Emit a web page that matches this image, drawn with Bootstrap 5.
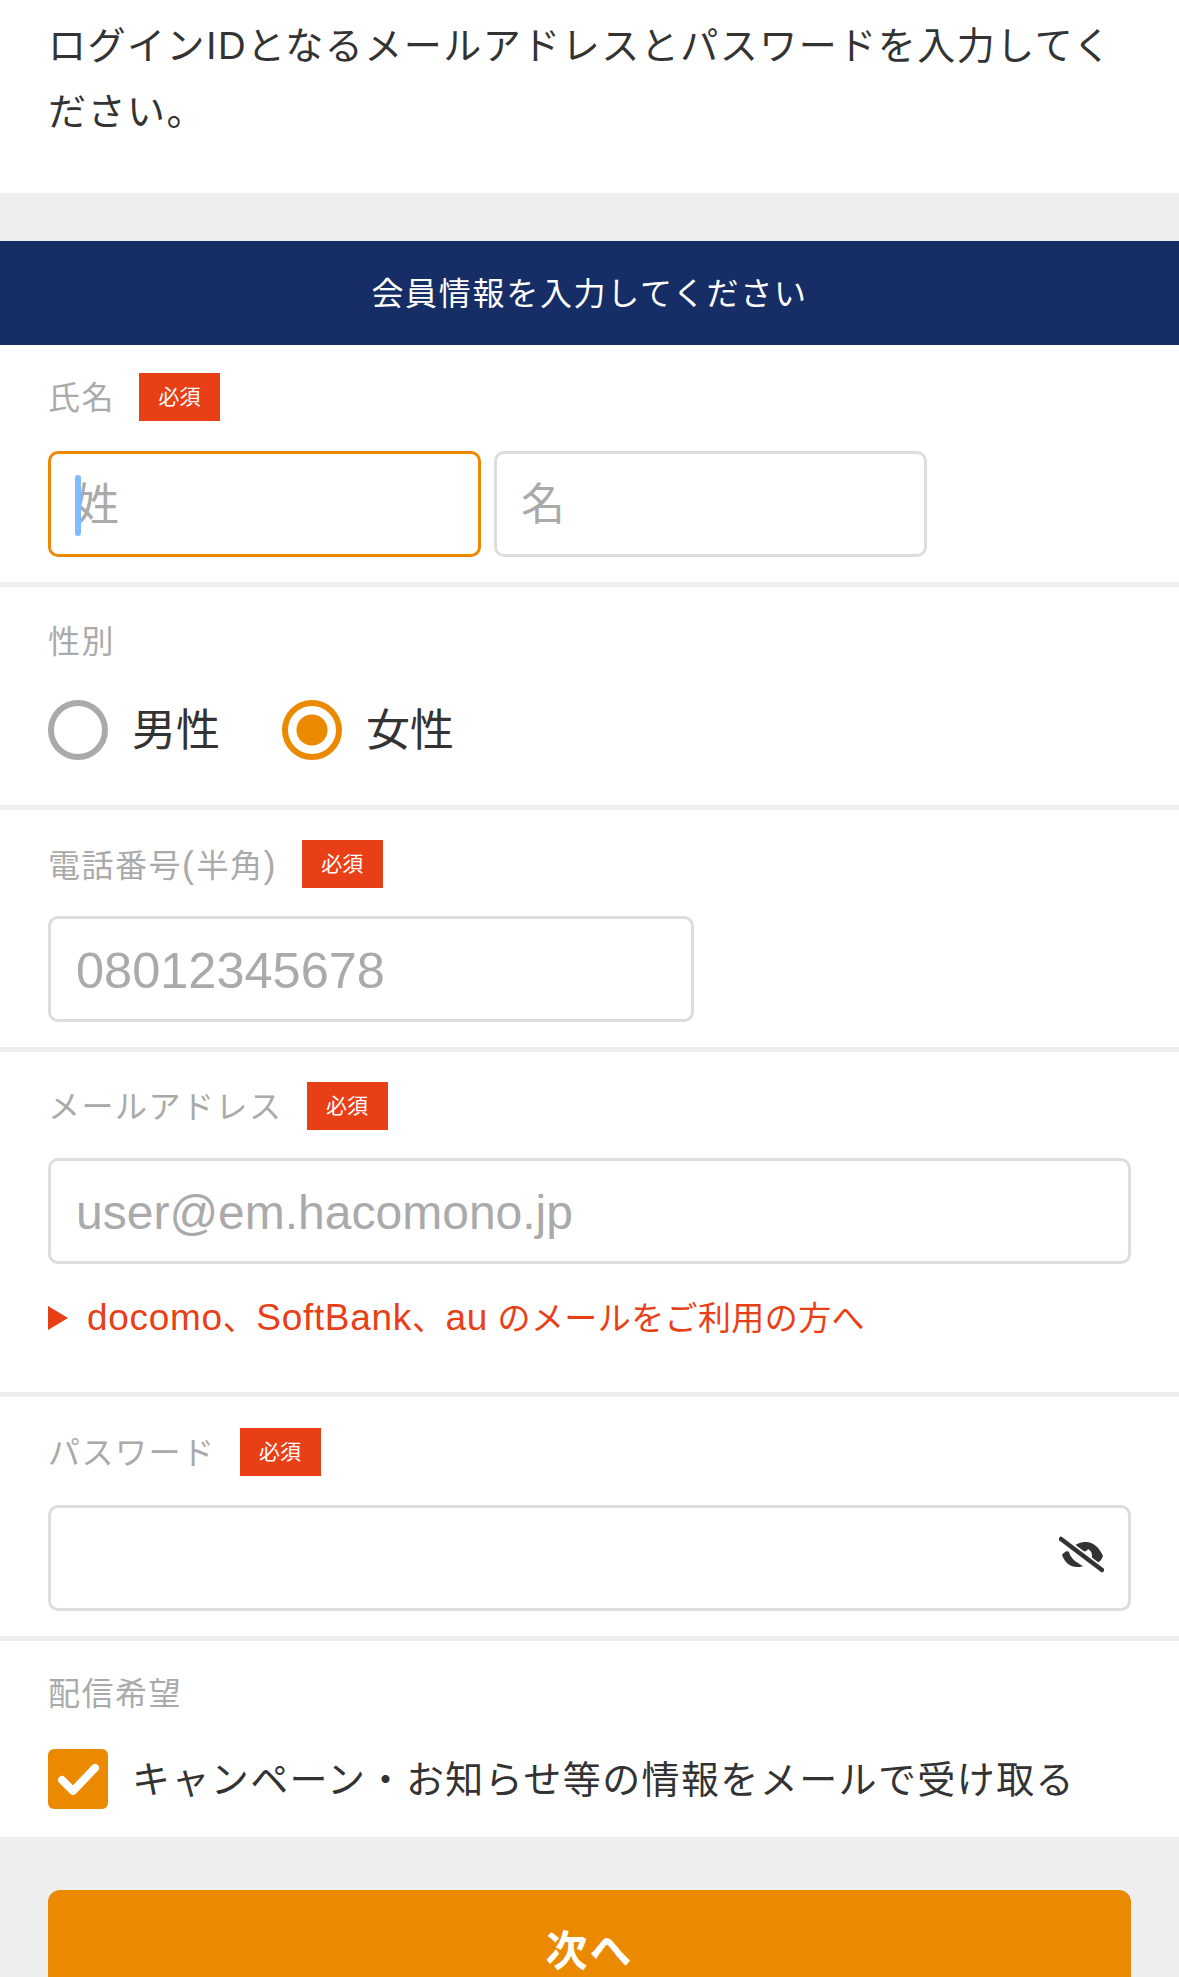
<!DOCTYPE html>
<html lang="ja">
<head>
<meta charset="utf-8">
<title>会員情報</title>
<link rel="stylesheet" href="https://cdn.jsdelivr.net/npm/bootstrap@5.3.0/dist/css/bootstrap.min.css">
<style>
html,body{background:#eee;}
body{font-family:"Liberation Sans","Noto Sans CJK JP",sans-serif;color:#333;font-weight:400;}
.page-clip{height:1977px;overflow:hidden;}
.intro-text{background:#fff;padding:13px 48px 48px;font-size:38px;line-height:66px;letter-spacing:1.5px;margin-bottom:48px;}
.form-head{background:#162e65;color:#fff;height:104px;padding-top:3px;font-size:32px;letter-spacing:1.7px;}
.field-box{background:#fff;padding:28px 48px 25px;margin-bottom:5px;}
.field-label{height:48px;color:#aaa;font-size:32px;letter-spacing:1.5px;gap:24px;}
.field-label .label-words{padding-top:2px;}
.paren{font-size:36px;letter-spacing:2.4px;}
.req-tag{width:81px;height:48px;background:#e93f16;color:#fff;font-size:21px;letter-spacing:0;font-weight:400;}
.text-input.form-control{height:106px;border:3px solid #ddd;border-radius:10px;padding:2px 24px 0;font-size:44px;font-weight:400;color:#333;letter-spacing:2px;box-shadow:none;background:#fff;}
.text-input.form-control::placeholder{color:#aaa;opacity:1;}
.text-input.is-current{border-color:#eb8a00;}
.text-input.latin-input.form-control{font-size:48px;letter-spacing:0;padding-left:25px;}
.text-input.tel-input.form-control{font-size:50.5px;}
.input-pair{margin-top:30px;gap:13px;}
.input-half{width:433px;}
.input-tel{width:646px;}
.text-caret{position:absolute;left:27px;top:24px;width:6px;height:61px;border-radius:3px;background:#7fbcff;}
.choice-row{margin-top:35px;gap:62px;font-size:44px;line-height:56px;}
.choice-row label{gap:24px;}
.choice-words{padding-top:2px;}
.form-check-input.round-pick{width:60px;height:60px;margin:0;border:6px solid #aaa;background:#fff;box-shadow:none;flex:none;}
.form-check-input.round-pick:checked{border-color:#eb8a00;background-color:#fff;background-image:radial-gradient(circle,#eb8a00 0 15px,transparent 16px);}
.form-check-input.square-pick{width:60px;height:60px;margin:0;border:0;border-radius:6px;background-color:#eb8a00;background-image:url("data:image/svg+xml,%3Csvg xmlns='http://www.w3.org/2000/svg' viewBox='0 0 60 60'%3E%3Cpath d='M14 31l11 11 22-23' fill='none' stroke='%23fff' stroke-width='8' stroke-linecap='round' stroke-linejoin='round'/%3E%3C/svg%3E");background-size:100% 100%;box-shadow:none;flex:none;}
.mail-note{margin-top:35px;height:38px;font-size:33px;color:#e93f16;gap:19px;letter-spacing:.4px;}
.note-latin{font-size:37px;letter-spacing:.7px;}
.note-arrow{width:0;height:0;border-left:20px solid #e93f16;border-top:12px solid transparent;border-bottom:12px solid transparent;}
.eye-toggle{position:absolute;right:27px;top:31px;width:45px;height:37px;}
.opt-in{margin-top:32px;gap:24px;font-size:38px;line-height:54px;letter-spacing:1.4px;}
.opt-words{padding-top:2px;}
.next-wrap{margin-top:-5px;padding:53px 48px 0;}
.next-btn.btn{display:block;width:100%;height:122px;border:0;border-radius:12px;background:#eb8a00;color:#fff;font-size:42px;font-weight:700;letter-spacing:2px;}
.gap-sex{padding-top:30px;padding-bottom:45px;}
.gap-field{padding-top:30px;}
.gap-mail{padding-top:30px;padding-bottom:55px;}
.gap-pass{padding-top:31px;}
.gap-opt{padding-top:28px;padding-bottom:28px;}
.under-label{margin-top:28px;}
.pass-wrap{margin-top:29px;}
</style>
</head>
<body>
<div class="page-clip">
  <p class="intro-text">ログインIDとなるメールアドレスとパスワードを入力してください。</p>
  <h2 class="form-head d-flex align-items-center justify-content-center m-0 fw-normal">会員情報を入力してください</h2>
  <form>
    <div class="field-box">
      <div class="field-label d-flex align-items-center"><span class="label-words">氏名</span><span class="req-tag d-flex align-items-center justify-content-center">必須</span></div>
      <div class="input-pair d-flex">
        <div class="position-relative input-half"><input class="form-control text-input is-current" placeholder="姓"><span class="text-caret"></span></div>
        <input class="form-control text-input input-half" placeholder="名">
      </div>
    </div>
    <div class="field-box gap-sex">
      <div class="field-label d-flex align-items-center"><span class="label-words">性別</span></div>
      <div class="choice-row d-flex">
        <label class="d-flex align-items-center"><input class="form-check-input round-pick" type="radio" name="sex"><span class="choice-words">男性</span></label>
        <label class="d-flex align-items-center"><input class="form-check-input round-pick" type="radio" name="sex" checked><span class="choice-words">女性</span></label>
      </div>
    </div>
    <div class="field-box gap-field">
      <div class="field-label d-flex align-items-center"><span class="label-words">電話番号<span class="paren">(</span>半角<span class="paren">)</span></span><span class="req-tag d-flex align-items-center justify-content-center">必須</span></div>
      <input class="form-control text-input latin-input tel-input input-tel under-label" placeholder="08012345678">
    </div>
    <div class="field-box gap-mail">
      <div class="field-label d-flex align-items-center"><span class="label-words">メールアドレス</span><span class="req-tag d-flex align-items-center justify-content-center">必須</span></div>
      <input class="form-control text-input latin-input under-label" placeholder="user@em.hacomono.jp">
      <div class="mail-note d-flex align-items-center"><span class="note-arrow"></span><span><span class="note-latin">docomo</span>、<span class="note-latin">SoftBank</span>、<span class="note-latin">au</span> のメールをご利用の方へ</span></div>
    </div>
    <div class="field-box gap-pass">
      <div class="field-label d-flex align-items-center"><span class="label-words">パスワード</span><span class="req-tag d-flex align-items-center justify-content-center">必須</span></div>
      <div class="position-relative pass-wrap">
        <input class="form-control text-input" type="password">
        <svg class="eye-toggle" viewBox="0 0 45 37" aria-hidden="true">
          <path d="M14 11C18 7 23 6 27 6c7 0 13 5 17 14-1 3-3 6-7 8l-5-4c2-4 1-9-3-11-1 2-3 3-5 2l-1 3z" fill="#333"/>
          <path d="M3 19c1-2 3-3 5-4l2 1c1 5 6 10 14 14-2 1-4 1-6 1C11 31 6 27 3 19z" fill="#333"/>
          <path d="M1 2l43 33" stroke="#fff" stroke-width="8"/>
          <path d="M2 3l41 31" stroke="#333" stroke-width="4.5" stroke-linecap="round"/>
        </svg>
      </div>
    </div>
    <div class="field-box gap-opt">
      <div class="field-label d-flex align-items-center"><span class="label-words">配信希望</span></div>
      <label class="opt-in d-flex align-items-center"><input class="form-check-input square-pick" type="checkbox" checked><span class="opt-words">キャンペーン・お知らせ等の情報をメールで受け取る</span></label>
    </div>
    <div class="next-wrap"><button type="button" class="btn next-btn">次へ</button></div>
  </form>
</div>
</body>
</html>
